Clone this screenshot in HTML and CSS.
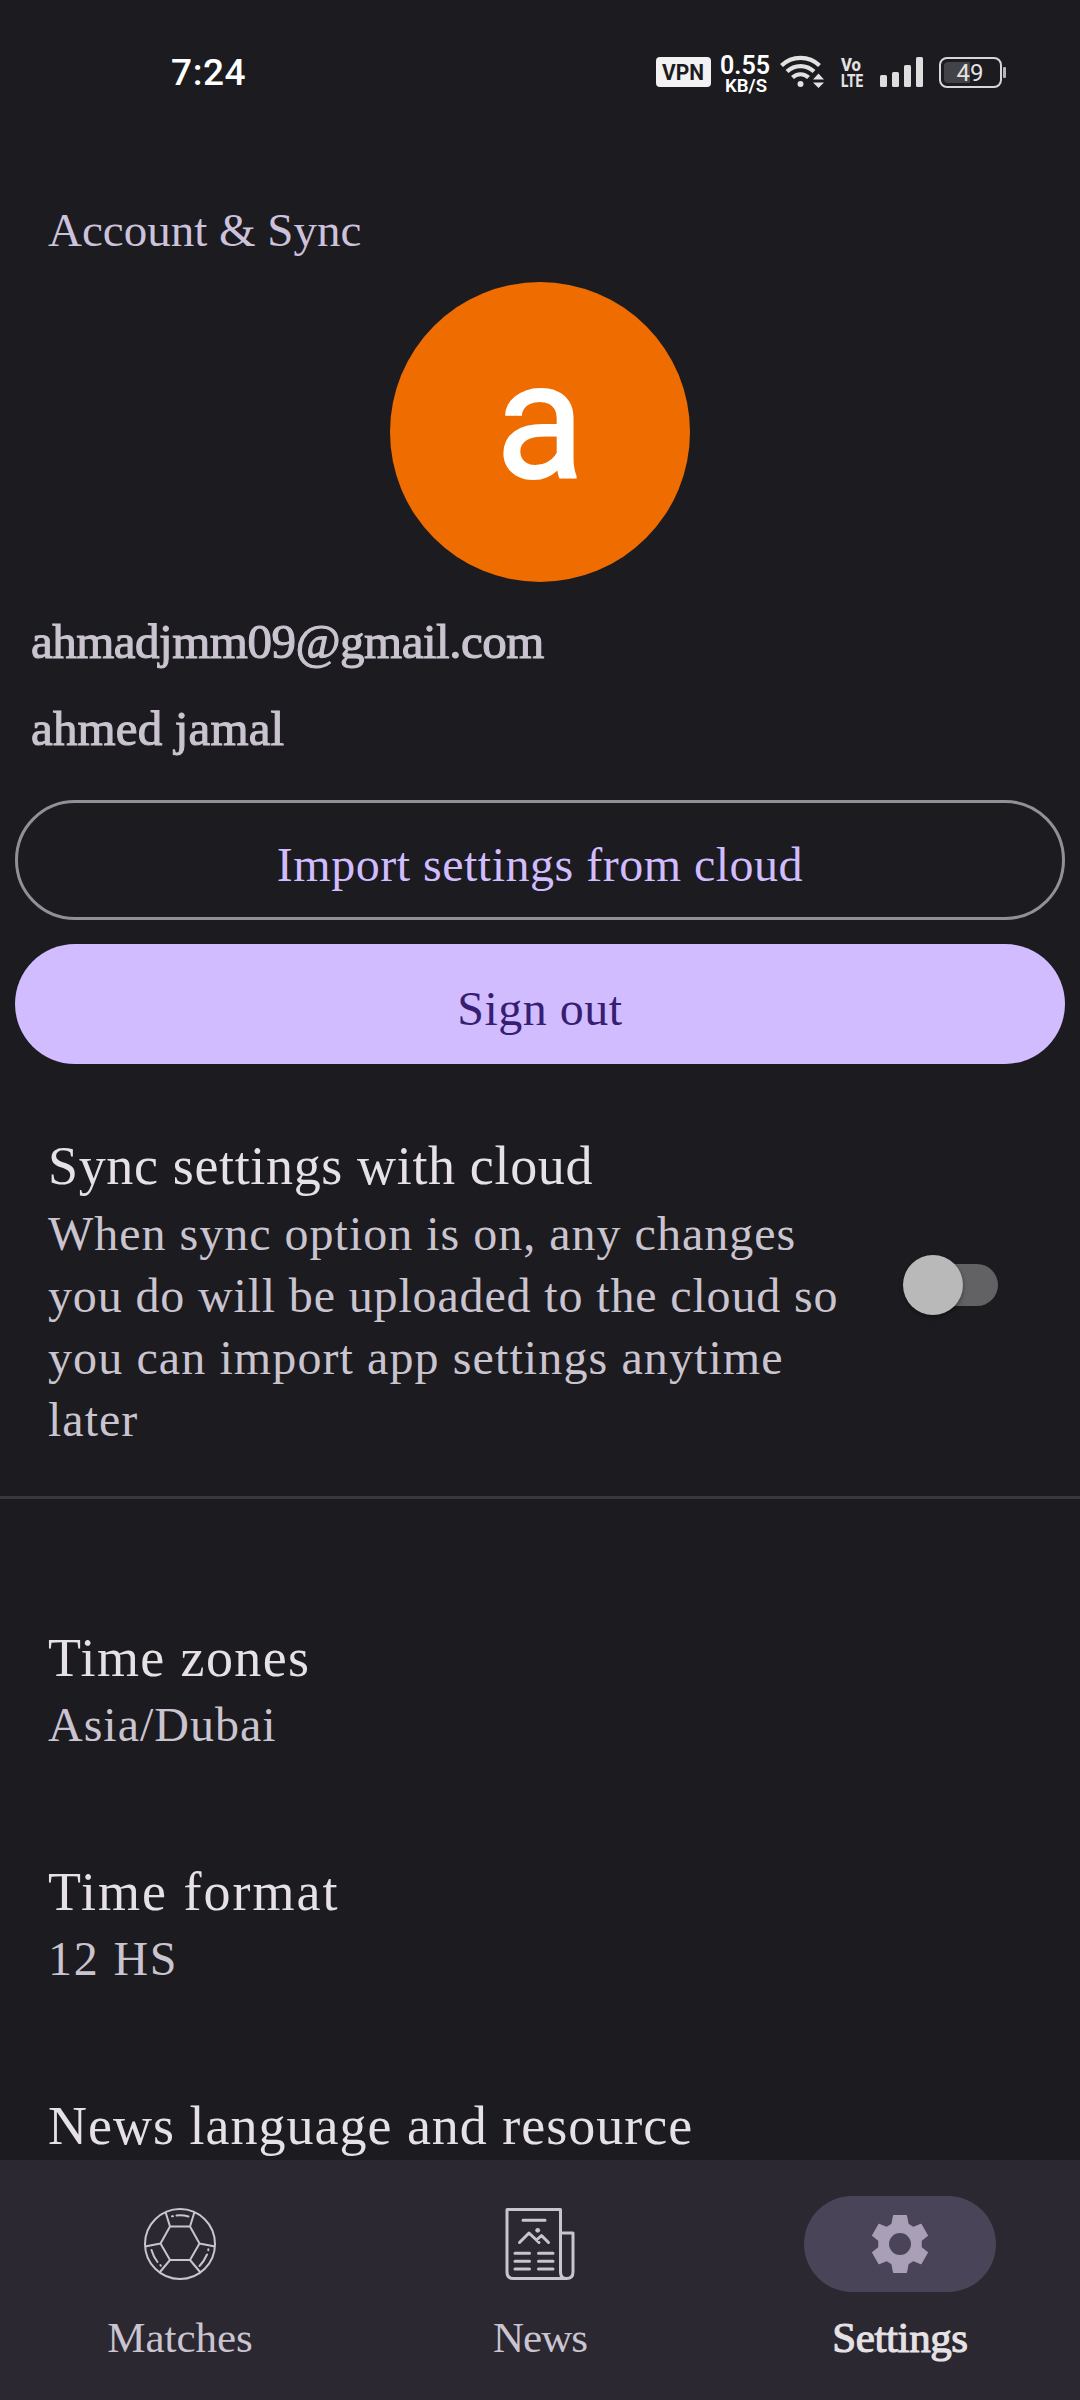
FILE: index.html
```html
<!DOCTYPE html>
<html lang="en">
<head>
<meta charset="utf-8">
<title>Settings</title>
<link rel="stylesheet" href="styles.css">
</head>
<body>
<div class="screen">
  <header class="status-bar">
    <span class="clock">7:24</span>
    <div class="indicators">
      <svg class="vpn" width="55" height="30" viewBox="0 0 55 30"><rect width="55" height="30" rx="4" fill="#f2f2f2"/><text x="6" y="22.500" textLength="42" lengthAdjust="spacingAndGlyphs" font-size="22" font-weight="700">VPN</text></svg>
      <svg class="speed" width="50" height="38" viewBox="0 0 50 38"><text x="0" y="18" textLength="50" lengthAdjust="spacingAndGlyphs" font-size="25" font-weight="600">0.55</text><text x="5" y="35.500" textLength="42" lengthAdjust="spacingAndGlyphs" font-size="18" font-weight="600">KB/S</text></svg>
      <svg class="wifi" width="44" height="34" viewBox="0 0 44 34" fill="none" stroke="#e2e2e2" stroke-width="4.200"><path d="M1.500 11.500a27.500 27.500 0 0 1 38 0"/><path d="M7 17.500a19.500 19.500 0 0 1 27 0"/><path d="M12.500 23.500a11.500 11.500 0 0 1 16 0"/><circle cx="20.500" cy="30" r="3" fill="#e2e2e2" stroke="none"/><path d="M33 25.500l5.500-6 5.500 6zM33 28.500h11l-5.500 5.500z" fill="#e2e2e2" stroke="none"/></svg>
      <svg class="volte" width="22" height="30" viewBox="0 0 22 30"><text x="0" y="14" textLength="20" lengthAdjust="spacingAndGlyphs" font-size="18" font-weight="800">Vo</text><text x="0" y="30" textLength="22" lengthAdjust="spacingAndGlyphs" font-size="19" font-weight="800">LTE</text></svg>
      <svg class="signal" width="43" height="30" viewBox="0 0 43 30" fill="#dedede"><rect y="18" width="7" height="12" rx="1.500"/><rect x="12" y="15" width="7" height="15" rx="1.500"/><rect x="24" y="8" width="7" height="22" rx="1.500"/><rect x="36" width="7" height="30" rx="1.500"/></svg>
      <svg class="battery" width="67" height="31" viewBox="0 0 67 31"><rect x="1" y="1" width="61" height="29" rx="7" fill="none" stroke="#d6d6d6" stroke-width="2"/><path d="M9 5h22v21H9a4 4 0 0 1-4-4V9a4 4 0 0 1 4-4z" fill="#434247"/><rect x="64" y="10" width="3" height="11" rx="1" fill="#b5b5b5"/><text x="17.500" y="24" textLength="27" lengthAdjust="spacingAndGlyphs" font-size="24">49</text></svg>
    </div>
  </header>

  <main class="content">
    <h2 class="category">Account &amp; Sync</h2>
    <div class="avatar"><span>a</span></div>
    <p class="account email">ahmadjmm09@gmail.com</p>
    <p class="account name">ahmed jamal</p>
    <div class="actions">
      <button class="button outlined">Import settings from cloud</button>
      <button class="button filled">Sign out</button>
    </div>
    <section class="preference sync">
      <div class="preference-text">
        <h3 class="title sync-title">Sync settings with cloud</h3>
        <p class="summary"><span class="loose">When sync option is on, any changes</span><br>you do will be uploaded to the cloud so<br><span class="looser">you can import app settings anytime</span><br><span class="loose">later</span></p>
      </div>
      <div class="switch"><span class="thumb"></span></div>
    </section>
    <section class="preference zones">
      <h3 class="title zones-title">Time zones</h3>
      <p class="summary loose">Asia/Dubai</p>
    </section>
    <section class="preference format">
      <h3 class="title format-title">Time format</h3>
      <p class="summary hours">12 HS</p>
    </section>
    <section class="preference news">
      <h3 class="title">News language and resource</h3>
    </section>
  </main>

  <nav class="bottom-nav">
    <a class="nav-item">
      <span class="nav-icon">
        <svg width="72" height="72" viewBox="0 0 72 72" fill="none" stroke="#cac4d0" stroke-width="2"><circle cx="36" cy="36" r="35"/><path d="M26 18.500h20L55.500 35.500 46 52H26L16.500 35.500zM26 18.500L21.500 4M46 18.500L50.500 4M55.500 35.500l15.500 3M46 52l10.500 12.500M26 52L16 64M16.500 35.500l-15.500 3"/><path d="M32.500 7.500q6-.7 12 1M28 8.300h1M7.500 42q2 7 6 12M16.300 57l.5.700M64.300 41.300v1M63 46.500q-3 7-7.500 11.500" stroke-linecap="round"/></svg>
      </span>
      <span class="label">Matches</span>
    </a>
    <a class="nav-item">
      <span class="nav-icon">
        <svg width="72" height="72" viewBox="0 0 72 72" fill="none" stroke="#cac4d0" stroke-width="3" stroke-linejoin="round" stroke-linecap="round"><path d="M56.500 65V1.500H3V64q0 6.500 6.500 6.500H62.500q6.500 0 6.500-6.500V25H56.500M56.500 64q0 6.500 6 6.500"/><path d="M19 12.300h22M15.500 34.500L25 25l10 9.500M32.500 32l5-4.500 7 7M11 45.300h14.500M34.500 45.300H49M11 53.200h14.500M34.500 53.200H49M11 61h14.500M34.500 61H49"/><circle cx="33.700" cy="22.300" r="2.400" fill="#cac4d0" stroke="none"/></svg>
      </span>
      <span class="label label-news">News</span>
    </a>
    <a class="nav-item active">
      <span class="nav-icon">
        <svg width="72" height="72" viewBox="-36 -36 72 72" fill="#a99fb6" stroke="#a99fb6" stroke-width="1.500" stroke-linejoin="round"><path fill-rule="evenodd" d="M-6.300-28.200H6.300L8-19.500 13.300-16.300 21-19.500 27.300-8.500 21-3.500V3.500L27.300 8.500 21 19.500 13.300 16.300 8 19.500 6.300 28.200H-6.300L-8 19.500-13.300 16.300-21 19.500-27.300 8.500-21 3.500V-3.500L-27.300-8.500-21-19.500-13.300-16.300-8-19.500zM0-11.700a11.700 11.700 0 1 0 0 23.400a11.700 11.700 0 1 0 0-23.400z"/></svg>
      </span>
      <span class="label">Settings</span>
    </a>
  </nav>
</div>
</body>
</html>
```
FILE: styles.css
```css
* { box-sizing: border-box; }
body { margin: 0; background: #1c1b1f; }
h2, h3, p { margin: 0; font-weight: 400; }

.screen {
  width: 1080px;
  height: 2400px;
  display: flex;
  flex-direction: column;
  overflow: hidden;
  background: #1c1b1f;
  color: #cac4d0;
  font-family: "Liberation Serif", serif;
}

.status-bar {
  height: 144px;
  flex: none;
  display: flex;
  justify-content: space-between;
  padding: 50px 74px 0 171px;
  font-family: Roboto, sans-serif;
}
.clock { font-size: 37px; line-height: 46px; font-weight: 500; letter-spacing: .6px; color: #fff; }
.indicators { display: flex; align-items: flex-start; padding-top: 7px; }
.indicators svg { overflow: visible; }
.indicators text { fill: #e2e2e2; }
.indicators .vpn text { fill: #1c1b1f; }
.indicators .speed text { fill: #fff; }
.speed { margin: -1px 0 0 9px; }
.wifi { margin: -3px 0 0 10px; }
.volte { margin-left: 17px; }
.signal { margin-left: 17px; }
.battery { margin-left: 16px; }

.content {
  flex: 1;
  min-height: 0;
  overflow: hidden;
  display: flex;
  flex-direction: column;
}
.content > * { flex: none; }
.category { padding: 56px 48px 0; font-size: 47px; line-height: 60px; color: #ccc2dc; }
.avatar {
  width: 300px;
  height: 300px;
  margin: 22px auto 0;
  border-radius: 50%;
  background: #ef6c00;
  color: #fff;
  display: flex;
  justify-content: center;
  font: 400 163px/279px Roboto, sans-serif;
  -webkit-text-stroke: 2px #fff;
}
.account { padding-left: 31px; font-size: 49px; line-height: 60px; -webkit-text-stroke: 1.1px #cac4d0; }
.email { margin-top: 30px; letter-spacing: -.5px; }
.name { margin-top: 27px; letter-spacing: .15px; }

.actions { display: flex; flex-direction: column; gap: 24px; padding: 41px 15px 0; }
.button {
  height: 120px;
  padding: 9px 0 0;
  border-radius: 60px;
  border: 0;
  font: 48px/60px "Liberation Serif", serif;
  letter-spacing: .5px;
}
.outlined { border: 3px solid #938f99; background: none; color: #d0bcff; }
.filled { background: #d0bcff; color: #381e72; }

.preference { padding-left: 48px; }
.title { font-size: 54px; line-height: 72px; letter-spacing: 1px; color: #e6e1e5; }
.sync-title { letter-spacing: .65px; }
.zones-title { letter-spacing: 1.4px; }
.format-title { letter-spacing: 2px; }
.summary { font-size: 48px; line-height: 62px; letter-spacing: .85px; white-space: nowrap; }
.loose { letter-spacing: 1px; }
.looser { letter-spacing: 1.1px; }
.hours { letter-spacing: 1.8px; }
.sync {
  height: 435px;
  padding-top: 66px;
  border-bottom: 3px solid #39383c;
  display: flex;
  justify-content: space-between;
}
.sync .summary { padding-top: 1px; }
.switch {
  width: 90px;
  height: 42px;
  margin: 134px 82px 0 0;
  border-radius: 21px;
  background: #626164;
  display: flex;
  align-items: center;
}
.thumb {
  width: 60px;
  height: 60px;
  flex: none;
  margin-left: -5px;
  border-radius: 50%;
  background: #b9b9b9;
  box-shadow: 0 2px 4px rgba(0, 0, 0, .4);
}
.zones { padding-top: 123px; }
.format { padding-top: 100px; }
.news { padding-top: 100px; }

.bottom-nav { height: 240px; flex: none; display: flex; background: #2b2831; }
.nav-item { flex: 1; display: flex; flex-direction: column; align-items: center; padding-top: 36px; }
.nav-icon { width: 192px; height: 96px; border-radius: 48px; display: flex; align-items: center; justify-content: center; }
.label { margin-top: 21px; font-size: 43px; line-height: 50px; }
.label-news { letter-spacing: -1px; }
.active .nav-icon { background: #4a4458; }
.active .label { color: #e6e1e5; -webkit-text-stroke: 1.1px #e6e1e5; letter-spacing: -.4px; }
```
